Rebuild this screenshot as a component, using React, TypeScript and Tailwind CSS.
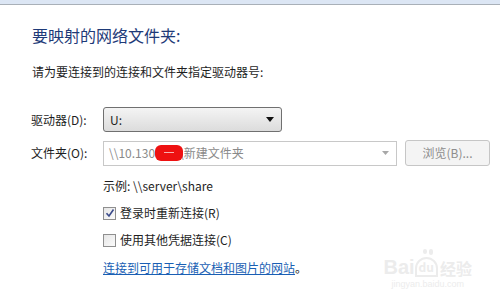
import React from "react";

const font = { fontFamily: '"Microsoft YaHei", "Noto Sans CJK SC", "Noto Sans", sans-serif' };

const Checkbox = ({ checked }: { checked?: boolean }) => (
  <span className="flex h-[13px] w-[13px] items-center justify-center border border-[#8f8f8f] bg-gradient-to-br from-[#e6e6e6] to-[#fbfbfb]">
    {checked && (
      <svg width="10" height="10" viewBox="0 0 10 10">
        <path d="M1.5 5.2 L4 8 L8.5 1.5" fill="none" stroke="#3a4a8a" strokeWidth="1.6" />
      </svg>
    )}
  </span>
);

const App = () => {
  return (
    <div className="relative h-[299px] w-[500px] overflow-hidden bg-white text-[#1e1e1e]" style={font}>
      <div className="h-[5px] border-b border-[#a9b0b8] bg-[#dce6f4]" />

      <div className="pl-[32px] pt-[18px]">
        <h1 className="text-[16px] leading-[24px] text-[#1e3a78]">要映射的网络文件夹:</h1>
        <p className="mt-[16px] text-[12px] leading-[18px]">请为要连接到的连接和文件夹指定驱动器号:</p>
      </div>

      <div className="mt-[26px] flex items-center pl-[31px]">
        <span className="w-[72px] text-[12px]">驱动器(D):</span>
        <div className="flex h-[25px] w-[179px] items-center justify-between rounded-[3px] border border-[#707070] bg-gradient-to-b from-[#f4f4f4] to-[#dcdcdc] pl-[6px] pr-[7px] text-[12px]">
          <span>U:</span>
          <svg width="8" height="5" viewBox="0 0 8 5">
            <path d="M0 0 H8 L4 5 Z" fill="#111" />
          </svg>
        </div>
      </div>

      <div className="mt-[8px] flex items-center pl-[31px]">
        <span className="w-[72px] text-[12px]">文件夹(O):</span>
        <div className="relative flex h-[25px] w-[294px] items-center justify-between border border-[#c8c8c8] bg-white pl-[5px] pr-[7px] text-[12px] text-[#8a8a8a]">
          <span className="flex">
            <span>\\10.130</span>
            <span className="w-[24px]" />
            <span>\新建文件夹</span>
          </span>
          <span className="absolute left-[51px] top-[3px] flex h-[16px] w-[28px] items-center justify-center rounded-[6px] bg-[#ee1111]">
            <span className="h-[1px] w-[10px] bg-[#f7b0b0]" />
          </span>
          <svg width="7" height="4" viewBox="0 0 7 4">
            <path d="M0 0 H7 L3.5 4 Z" fill="#a8a8a8" />
          </svg>
        </div>
        <div className="ml-[8px] flex h-[26px] w-[85px] items-center justify-center rounded-[3px] border border-[#c6c6c6] bg-[#f4f4f4] text-[12px] text-[#8d8d8d]">
          浏览(B)...
        </div>
      </div>

      <div className="pl-[103px]">
        <p className="mt-[11px] text-[12px] leading-[18px]">示例: \\server\share</p>
        <label className="mt-[9px] flex items-center gap-[4px] text-[12px] leading-[18px]">
          <Checkbox checked />
          <span>登录时重新连接(R)</span>
        </label>
        <label className="mt-[9px] flex items-center gap-[4px] text-[12px] leading-[18px]">
          <Checkbox />
          <span>使用其他凭据连接(C)</span>
        </label>
        <p className="mt-[10px] text-[12px] leading-[18px]">
          <span className="text-[#1a5fb4] underline">连接到可用于存储文档和图片的网站</span>
          <span>。</span>
        </p>
      </div>

      <div className="absolute bottom-[10px] right-[28px] flex flex-col items-center text-[#ececec]">
        <div className="flex items-end">
          <span className="text-[20px] font-bold leading-[20px]" style={{ fontFamily: '"Liberation Sans", sans-serif' }}>Bai</span>
          <span className="relative flex h-[20px] items-center rounded-t-full border-2 border-[#ececec] px-[2px] text-[12px] font-bold leading-[12px]">
            du
            <span className="absolute -top-[10px] left-[6px] flex gap-[2px]">
              <span className="h-[5px] w-[4px] rounded-full bg-[#ececec]" />
              <span className="h-[6px] w-[4px] rounded-full bg-[#ececec]" />
            </span>
          </span>
          <span className="ml-[2px] text-[16px] font-bold leading-[18px]">经验</span>
        </div>
        <span className="mt-[2px] text-[9px] leading-[10px]" style={{ fontFamily: '"Liberation Sans", sans-serif' }}>jingyan.baidu.com</span>
      </div>
    </div>
  );
};

export default App;
